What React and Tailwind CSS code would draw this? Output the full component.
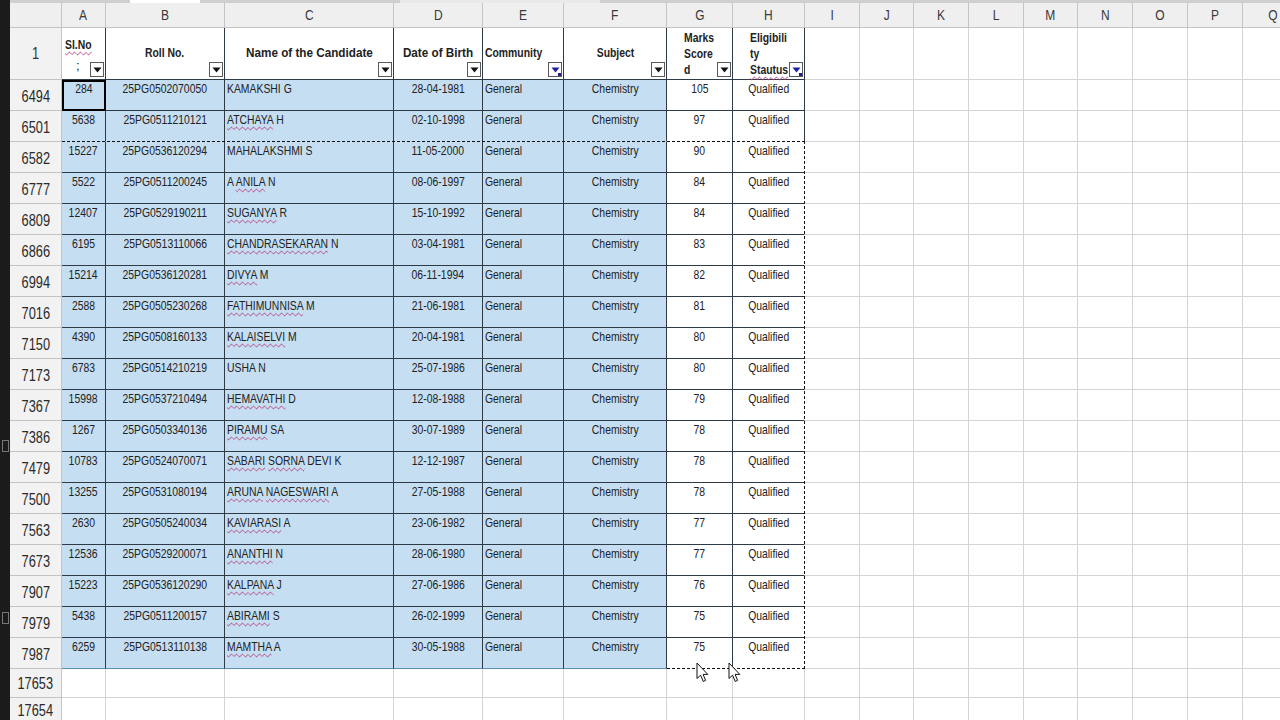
import React from 'react';

const rows = [
  [6494, 284, '25PG0502070050', 'KAMAKSHI G', '28-04-1981', 105],
  [6501, 5638, '25PG0511210121', 'ATCHAYA H', '02-10-1998', 97],
  [6582, 15227, '25PG0536120294', 'MAHALAKSHMI S', '11-05-2000', 90],
  [6777, 5522, '25PG0511200245', 'A ANILA N', '08-06-1997', 84],
  [6809, 12407, '25PG0529190211', 'SUGANYA R', '15-10-1992', 84],
  [6866, 6195, '25PG0513110066', 'CHANDRASEKARAN N', '03-04-1981', 83],
  [6994, 15214, '25PG0536120281', 'DIVYA M', '06-11-1994', 82],
  [7016, 2588, '25PG0505230268', 'FATHIMUNNISA M', '21-06-1981', 81],
  [7150, 4390, '25PG0508160133', 'KALAISELVI M', '20-04-1981', 80],
  [7173, 6783, '25PG0514210219', 'USHA N', '25-07-1986', 80],
  [7367, 15998, '25PG0537210494', 'HEMAVATHI D', '12-08-1988', 79],
  [7386, 1267, '25PG0503340136', 'PIRAMU SA', '30-07-1989', 78],
  [7479, 10783, '25PG0524070071', 'SABARI SORNA DEVI K', '12-12-1987', 78],
  [7500, 13255, '25PG0531080194', 'ARUNA NAGESWARI A', '27-05-1988', 78],
  [7563, 2630, '25PG0505240034', 'KAVIARASI A', '23-06-1982', 77],
  [7673, 12536, '25PG0529200071', 'ANANTHI N', '28-06-1980', 77],
  [7907, 15223, '25PG0536120290', 'KALPANA J', '27-06-1986', 76],
  [7979, 5438, '25PG0511200157', 'ABIRAMI S', '26-02-1999', 75],
  [7987, 6259, '25PG0513110138', 'MAMTHA A', '30-05-1988', 75],
];

// words flagged by the spell checker
const misspelt = new Set([
  'ATCHAYA', 'ANILA', 'SUGANYA', 'CHANDRASEKARAN', 'DIVYA', 'FATHIMUNNISA', 'KALAISELVI',
  'HEMAVATHI', 'PIRAMU', 'SABARI', 'SORNA', 'ARUNA', 'NAGESWARI', 'KAVIARASI', 'ANANTHI',
  'KALPANA', 'ABIRAMI', 'MAMTHA',
]);

const letters = ['A', 'B', 'C', 'D', 'E', 'F', 'G', 'H', 'I', 'J', 'K', 'L', 'M', 'N', 'O', 'P', 'Q'];
const widths = ['w-[44px]', 'w-[119px]', 'w-[169px]', 'w-[89px]', 'w-[81px]', 'w-[103px]', 'w-[66px]', 'w-[72px]', 'w-[55px]', 'w-[54px]', 'w-[55px]', 'w-[55px]', 'w-[54px]', 'w-[55px]', 'w-[55px]', 'w-[55px]', 'w-[60px]'];
const blank = ['w-[55px]', 'w-[54px]', 'w-[55px]', 'w-[55px]', 'w-[54px]', 'w-[55px]', 'w-[55px]', 'w-[55px]', 'w-[60px]'];

const wavy = 'underline decoration-wavy decoration-[#b0407a] decoration-1 underline-offset-[2px]';

// no Arial Narrow in the box, so squeeze Liberation Sans sideways
function N({ children, left, wide }) {
  return (
    <span
      className={`inline-block whitespace-nowrap ${wide ? 'scale-x-[0.9]' : 'scale-x-[0.8]'} ${left ? 'origin-left' : 'origin-center'}`}
    >
      {children}
    </span>
  );
}

function Dropdown({ blue }) {
  return (
    <span className="absolute right-[1px] bottom-[2px] w-[14px] h-[15px] bg-white border border-[#5a5a5a] flex items-center justify-center">
      <svg width="9" height="6" viewBox="0 0 9 6">
        <polygon points="0.5,0.5 8.5,0.5 4.5,5.5" fill={blue ? '#1f1fa3' : '#111'} />
      </svg>
      {blue && <span className="absolute right-[0px] bottom-[0px] w-[3px] h-[3px] bg-[#1f1fa3]" />}
    </span>
  );
}

function Name({ text }) {
  const words = text.split(' ');
  return (
    <N left>
      {words.map((w, i) => (
        <React.Fragment key={i}>
          {misspelt.has(w) ? <span className={wavy}>{w}</span> : w}
          {i < words.length - 1 ? ' ' : ''}
        </React.Fragment>
      ))}
    </N>
  );
}

function Cursor() {
  return (
    <svg width="13" height="21" viewBox="0 0 13 21">
      <path d="M1 1 L1 16.5 L4.6 13.2 L7.2 19.4 L9.6 18.4 L7.1 12.4 L11.8 12.4 Z" fill="#fff" stroke="#111" strokeWidth="1" strokeLinejoin="round" />
    </svg>
  );
}

export default function App() {
  const gridLine = 'border-r border-b border-[#d4d4d4]';
  const dark = 'border-[#2e3a46]';
  const head = `shrink-0 relative border-r border-b ${dark}`;

  return (
    <div className="w-[1280px] h-[720px] overflow-hidden flex bg-white text-[#222] font-['Liberation_Sans',Arial,sans-serif]">
      {/* dark strip from the window edge */}
      <div className="w-[10px] shrink-0 bg-[#1b1b1b] flex flex-col items-center">
        <div className="mt-[440px] w-[7px] h-[12px] border border-[#777]" />
        <div className="mt-[160px] w-[7px] h-[12px] border border-[#777]" />
      </div>

      <div className="relative flex-1 flex flex-col">
        <div className="h-[3px] shrink-0 flex bg-[#cfcfcf]">
          <div className="ml-[120px] w-[70px] bg-white" />
          <div className="ml-[200px] w-[200px] bg-[#e9e9e9]" />
        </div>

        {/* column letters */}
        <div className="flex h-[25px] shrink-0">
          <div className="w-[52px] shrink-0 bg-[#efefef] border-r border-b border-[#c4c4c4]" />
          {letters.map((l, i) => (
            <div
              key={l}
              className={`${widths[i]} shrink-0 bg-[#efefef] border-r border-b border-[#c4c4c4] flex items-center justify-center text-[15px] text-[#3a3a3a]`}
            >
              <N>{l}</N>
            </div>
          ))}
        </div>

        {/* header row 1 */}
        <div className="flex h-[52px] shrink-0 text-[13px] font-bold leading-[16px]">
          <div className="w-[52px] shrink-0 bg-[#f2f2f2] border-r border-b border-[#c4c4c4] flex items-center justify-center text-[16px] font-normal text-[#333]">
            <N>1</N>
          </div>
          <div className={`w-[44px] ${head} pl-[3px] pt-[9px]`}>
            <div>
              <N left>
                <span className={wavy}>Sl.No</span>
              </N>
            </div>
            <div className="pl-[11px] mt-[5px] font-normal">;</div>
            <Dropdown />
          </div>
          <div className={`w-[119px] ${head} flex items-center justify-center pb-[2px]`}>
            <N>Roll No.</N>
            <Dropdown />
          </div>
          <div className={`w-[169px] ${head} flex items-center justify-center pb-[2px]`}>
            <N wide>Name of the Candidate</N>
            <Dropdown />
          </div>
          <div className={`w-[89px] ${head} flex items-center justify-center pb-[2px]`}>
            <N wide>Date of Birth</N>
            <Dropdown />
          </div>
          <div className={`w-[81px] ${head} flex items-center pl-[2px] pb-[2px]`}>
            <N left>Community</N>
            <Dropdown blue />
          </div>
          <div className={`w-[103px] ${head} flex items-center justify-center pb-[2px]`}>
            <N>Subject</N>
            <Dropdown />
          </div>
          <div className={`w-[66px] ${head} pl-[17px] pt-[2px]`}>
            <div><N left>Marks</N></div>
            <div><N left>Score</N></div>
            <div><N left>d</N></div>
            <Dropdown />
          </div>
          <div className={`w-[72px] ${head} pl-[17px] pt-[2px]`}>
            <div><N left>Eligibili</N></div>
            <div><N left>ty</N></div>
            <div>
              <N left>
                <span className={wavy}>Stautus</span>
              </N>
            </div>
            <Dropdown blue />
          </div>
          {blank.map((w, i) => (
            <div key={i} className={`${w} shrink-0 ${gridLine}`} />
          ))}
        </div>

        {/* filtered data rows */}
        {rows.map((r, idx) => {
          const last = idx === rows.length - 1;
          const underAnts = idx === 1;
          const bBlue = underAnts ? 'border-b-[#c5def2]' : last ? 'border-b-[#5c8db3]' : '';
          const bWhite = underAnts || last ? 'border-b-white' : '';
          const blueCell = `shrink-0 bg-[#c5def2] border-r border-b ${dark} ${bBlue} pt-[2px] leading-[14px] text-[13px]`;
          const whiteCell = `shrink-0 bg-white border-r border-b ${dark} ${bWhite} pt-[2px] leading-[14px] text-[13px]`;
          return (
            <div key={r[0]} className="flex h-[31px] shrink-0">
              <div className="w-[52px] shrink-0 bg-[#f2f2f2] border-r border-b border-[#c4c4c4] flex items-center justify-center text-[16px] text-[#2a2a2a] pt-[3px]">
                <N>{r[0]}</N>
              </div>
              <div className={`w-[44px] ${blueCell} text-center ${idx === 0 ? 'outline-2 outline-black -outline-offset-2' : ''}`}>
                <N>{r[1]}</N>
              </div>
              <div className={`w-[119px] ${blueCell} text-center`}>
                <N>{r[2]}</N>
              </div>
              <div className={`w-[169px] ${blueCell} pl-[2px]`}>
                <Name text={r[3]} />
              </div>
              <div className={`w-[89px] ${blueCell} text-center`}>
                <N>{r[4]}</N>
              </div>
              <div className={`w-[81px] ${blueCell} pl-[2px]`}>
                <N left>General</N>
              </div>
              <div className={`w-[103px] ${blueCell} text-center`}>
                <N>Chemistry</N>
              </div>
              <div className={`w-[66px] ${whiteCell} text-center`}>
                <N>{r[5]}</N>
              </div>
              <div className={`w-[72px] ${whiteCell} ${idx >= 2 ? 'border-r-white' : ''} text-center`}>
                <N>Qualified</N>
              </div>
              {blank.map((w, i) => (
                <div key={i} className={`${w} ${gridLine}`} />
              ))}
            </div>
          );
        })}

        {/* empty rows below the filter */}
        <div className="flex h-[29px] shrink-0">
          <div className="w-[52px] shrink-0 bg-[#f2f2f2] border-r border-b border-[#c4c4c4] flex items-center justify-center text-[16px] text-[#2a2a2a] pt-[2px]">
            <N>17653</N>
          </div>
          {widths.map((w, i) => (
            <div key={i} className={`${w} shrink-0 ${gridLine}`} />
          ))}
        </div>
        <div className="flex h-[24px] shrink-0">
          <div className="w-[52px] shrink-0 bg-[#f2f2f2] border-r border-[#c4c4c4] flex items-center justify-center text-[16px] text-[#2a2a2a] pt-[2px]">
            <N>17654</N>
          </div>
          {widths.map((w, i) => (
            <div key={i} className={`${w} shrink-0 border-r border-[#d4d4d4]`} />
          ))}
        </div>

        {/* copy selection marching ants */}
        <div className="absolute left-[52px] top-[141px] w-[743px] h-[528px] border-t border-r border-dashed border-[#111] pointer-events-none" />
        <div className="absolute left-[657px] top-[668px] w-[138px] border-t border-dashed border-[#111] pointer-events-none" />

        {/* mouse pointers */}
        <div className="absolute left-[686px] top-[662px]">
          <Cursor />
        </div>
        <div className="absolute left-[718px] top-[662px]">
          <Cursor />
        </div>
      </div>
    </div>
  );
}
